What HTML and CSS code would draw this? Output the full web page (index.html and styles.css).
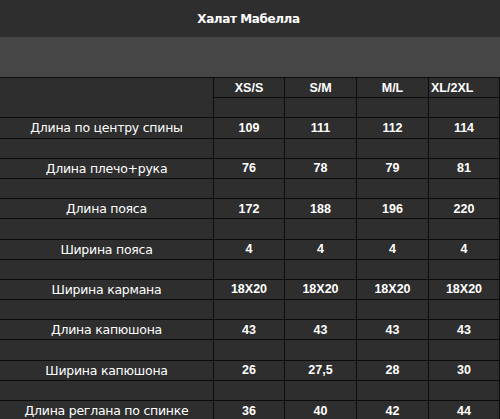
FILE: index.html
```html
<!DOCTYPE html>
<html lang="ru">
<head>
<meta charset="utf-8">
<title>Халат Мабелла</title>
<link rel="stylesheet" href="styles.css">
</head>
<body>
<div class="page">
  <div class="title">Халат Мабелла</div>
  <div class="band"></div>
  <div class="grid">
    <div class="cell label span2"></div>
    <div class="cell head">XS/S</div>
    <div class="cell head">S/M</div>
    <div class="cell head">M/L</div>
    <div class="cell head last">XL/2XL</div>
    <div class="cell"></div><div class="cell"></div><div class="cell"></div><div class="cell"></div>

    <div class="cell label">Длина по центру спины</div>
    <div class="cell num">109</div><div class="cell num">111</div><div class="cell num">112</div><div class="cell num">114</div>
    <div class="cell"></div><div class="cell"></div><div class="cell"></div><div class="cell"></div><div class="cell"></div>

    <div class="cell label">Длина плечо+рука</div>
    <div class="cell num">76</div><div class="cell num">78</div><div class="cell num">79</div><div class="cell num">81</div>
    <div class="cell"></div><div class="cell"></div><div class="cell"></div><div class="cell"></div><div class="cell"></div>

    <div class="cell label">Длина пояса</div>
    <div class="cell num">172</div><div class="cell num">188</div><div class="cell num">196</div><div class="cell num">220</div>
    <div class="cell"></div><div class="cell"></div><div class="cell"></div><div class="cell"></div><div class="cell"></div>

    <div class="cell label">Ширина пояса</div>
    <div class="cell num">4</div><div class="cell num">4</div><div class="cell num">4</div><div class="cell num">4</div>
    <div class="cell"></div><div class="cell"></div><div class="cell"></div><div class="cell"></div><div class="cell"></div>

    <div class="cell label">Ширина кармана</div>
    <div class="cell num">18X20</div><div class="cell num">18X20</div><div class="cell num">18X20</div><div class="cell num">18X20</div>
    <div class="cell"></div><div class="cell"></div><div class="cell"></div><div class="cell"></div><div class="cell"></div>

    <div class="cell label">Длина капюшона</div>
    <div class="cell num">43</div><div class="cell num">43</div><div class="cell num">43</div><div class="cell num">43</div>
    <div class="cell"></div><div class="cell"></div><div class="cell"></div><div class="cell"></div><div class="cell"></div>

    <div class="cell label">Ширина капюшона</div>
    <div class="cell num">26</div><div class="cell num">27,5</div><div class="cell num">28</div><div class="cell num">30</div>
    <div class="cell"></div><div class="cell"></div><div class="cell"></div><div class="cell"></div><div class="cell"></div>

    <div class="cell label">Длина реглана по спинке</div>
    <div class="cell num">36</div><div class="cell num">40</div><div class="cell num">42</div><div class="cell num">44</div>
  </div>
</div>
</body>
</html>
```
FILE: styles.css
```css
html, body {
  margin: 0;
  padding: 0;
  background: #2e2e2e;
}
.page {
  width: 500px;
  height: 419px;
  overflow: hidden;
  background: #2e2e2e;
}
.title {
  height: 37px;
  display: flex;
  align-items: center;
  justify-content: center;
  padding-right: 3px;
  box-sizing: border-box;
  color: #fff;
  font-family: "DejaVu Sans", sans-serif;
  font-weight: bold;
  font-size: 12px;
  letter-spacing: -0.4px;
}
.band {
  height: 40px;
  background: #464646;
}
.grid {
  display: grid;
  grid-template-columns: 213px 70px 71px 71px 70px;
  grid-auto-rows: 19.2px;
  gap: 1px;
  padding: 1px 1px 0 0;
  background: #0c0c0c;
  width: 500px;
  box-sizing: border-box;
}
.cell {
  background: #2e2e2e;
  color: #fff;
  display: flex;
  align-items: center;
  justify-content: center;
  white-space: nowrap;
  overflow: visible;
}
.span2 {
  grid-row: span 2;
}
.label {
  font-family: "DejaVu Sans", sans-serif;
  font-size: 12.5px;
  letter-spacing: -0.25px;
}
.head, .num {
  font-family: "Liberation Sans", Arial, sans-serif;
  font-weight: bold;
  font-size: 12.5px;
}
.head.last {
  justify-content: flex-start;
  padding-left: 2px;
}
```
